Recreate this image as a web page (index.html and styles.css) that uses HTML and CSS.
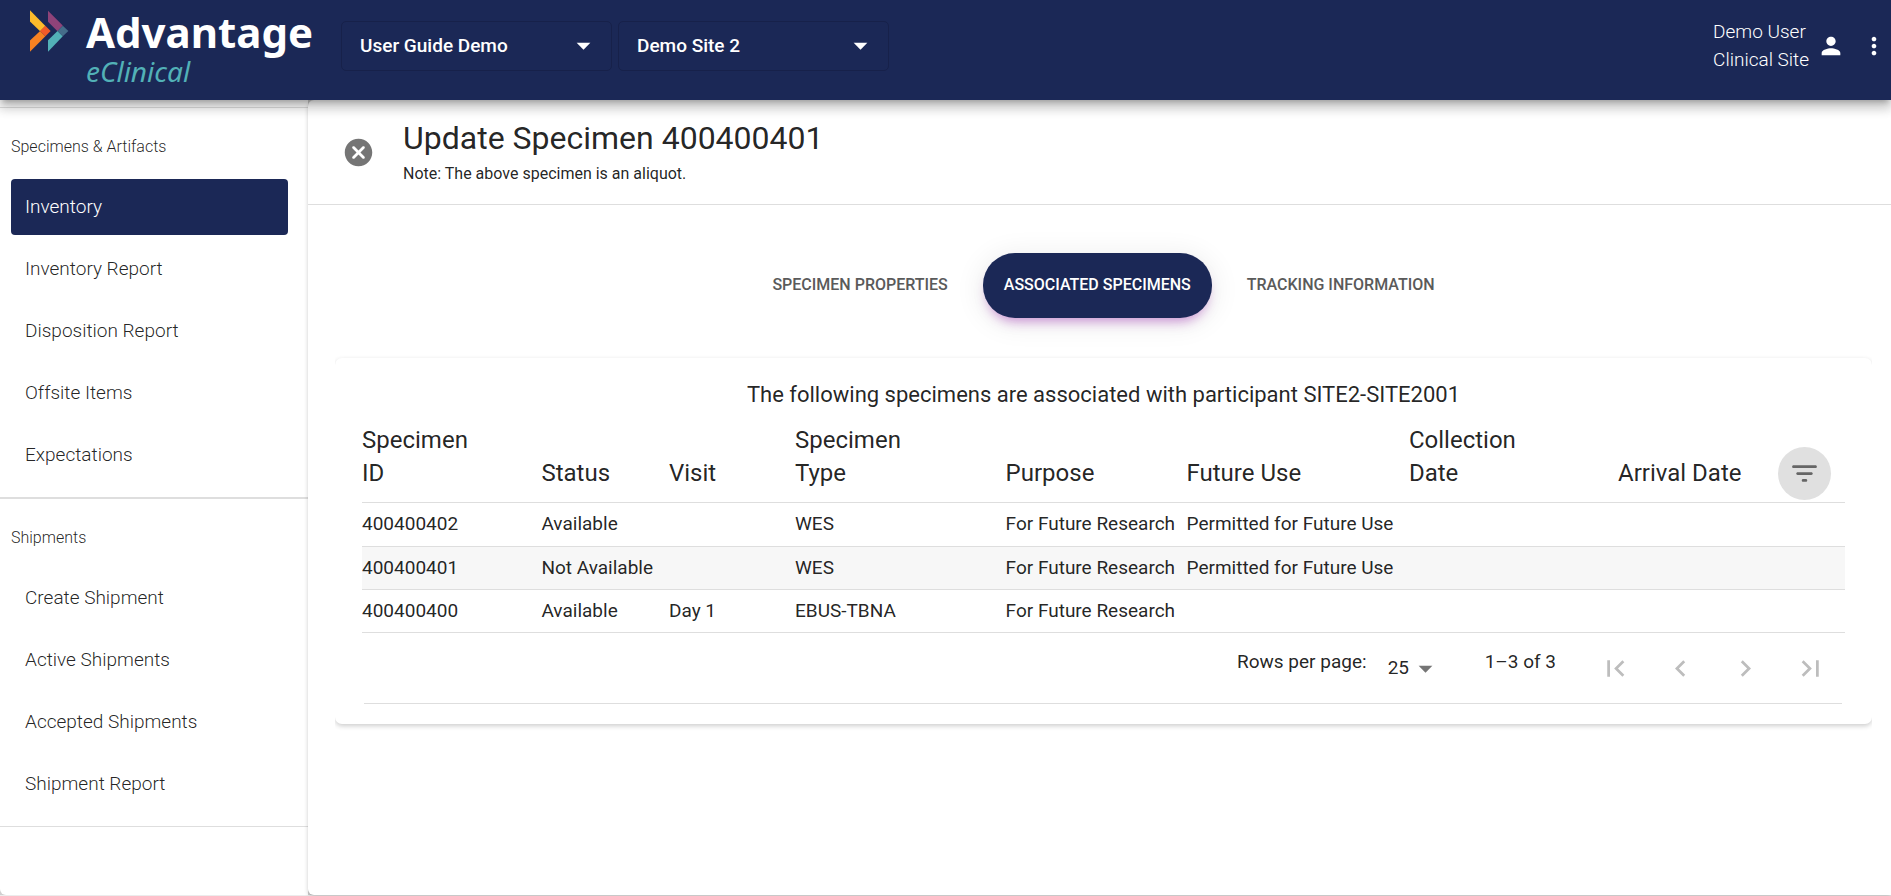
FILE: index.html
```html
<!DOCTYPE html>
<html lang="en">
<head>
<meta charset="utf-8">
<meta name="viewport" content="width=device-width, initial-scale=1">
<title>Update Specimen 400400401</title>
<link rel="stylesheet" href="styles.css">
</head>
<body>
<div class="app">
  <header class="topbar">
    <a class="brand" href="#" aria-label="Advantage eClinical">
      <svg class="brand-mark" viewBox="0 0 118 128" aria-hidden="true">
        <path fill="#fdbb2b" d="M1 1v34l31 30 16-16z"/>
        <path fill="#f68122" d="M1 127V93l31-29 16 16z"/>
        <path fill="#f15a29" d="M32 64l16-16 16 16-16 16z"/>
        <path fill="#8e4379" d="M56 2v34l29 29 16-18z"/>
        <path fill="#52b1b7" d="M56 127V92l29-28 16 16z"/>
        <path fill="#456d8a" d="M85 64l16-16 17 16-17 16z"/>
      </svg>
      <span class="brand-words">
        <span class="brand-name">Advantage</span>
        <span class="brand-sub">eClinical</span>
      </span>
    </a>
    <div class="pickers">
      <div class="picker">
        <select class="picker-select" aria-label="Protocol"><option>User Guide Demo</option></select>
        <svg class="caret" viewBox="0 0 24 24" aria-hidden="true"><path d="M7 10l5 5 5-5z"/></svg>
      </div>
      <div class="picker">
        <select class="picker-select" aria-label="Site"><option>Demo Site 2</option></select>
        <svg class="caret" viewBox="0 0 24 24" aria-hidden="true"><path d="M7 10l5 5 5-5z"/></svg>
      </div>
    </div>
    <div class="account">
      <div class="account-text">Demo User<br>Clinical Site</div>
      <button class="icon-button account-user" type="button" aria-label="Account">
        <svg class="icon-small" viewBox="0 0 24 24"><path d="M12 12c2.21 0 4-1.79 4-4s-1.79-4-4-4-4 1.79-4 4 1.790 4 4 4zm0 2c-2.670 0-8 1.340-8 4v2h16v-2c0-2.660-5.330-4-8-4z"/></svg>
      </button>
      <button class="icon-button" type="button" aria-label="More">
        <svg class="icon-small" viewBox="0 0 24 24"><path d="M12 8c1.100 0 2-.9 2-2s-.9-2-2-2-2 .9-2 2 .9 2 2 2zm0 2c-1.100 0-2 .9-2 2s.9 2 2 2 2-.9 2-2-.9-2-2-2zm0 6c-1.100 0-2 .9-2 2s.9 2 2 2 2-.9 2-2-.9-2-2-2z"/></svg>
      </button>
    </div>
  </header>

  <div class="body">
    <nav class="sidebar">
      <section class="nav-group">
        <h2 class="nav-label">Specimens &amp; Artifacts</h2>
        <a class="nav-item nav-item-active" href="#" aria-current="page">Inventory</a>
        <a class="nav-item" href="#">Inventory Report</a>
        <a class="nav-item" href="#">Disposition Report</a>
        <a class="nav-item" href="#">Offsite Items</a>
        <a class="nav-item" href="#">Expectations</a>
      </section>
      <section class="nav-group">
        <h2 class="nav-label">Shipments</h2>
        <a class="nav-item" href="#">Create Shipment</a>
        <a class="nav-item" href="#">Active Shipments</a>
        <a class="nav-item" href="#">Accepted Shipments</a>
        <a class="nav-item" href="#">Shipment Report</a>
      </section>
    </nav>

    <main class="panel">
      <div class="panel-head">
        <button class="icon-button close" type="button" aria-label="Close">
          <svg class="icon" viewBox="0 0 24 24"><path d="M12 2C6.470 2 2 6.470 2 12s4.470 10 10 10 10-4.470 10-10S17.530 2 12 2zm4.300 14.300c-.39.39-1.020.39-1.410 0L12 13.410 9.110 16.300c-.39.39-1.020.39-1.410 0-.39-.39-.39-1.020 0-1.410L10.590 12 7.700 9.110c-.39-.39-.39-1.020 0-1.410.39-.39 1.020-.39 1.410 0L12 10.590l2.890-2.890c.39-.39 1.020-.39 1.410 0 .39.39.39 1.020 0 1.410L13.410 12l2.890 2.890c.38.38.38 1.020 0 1.410z"/></svg>
        </button>
        <div>
          <h1 class="title">Update Specimen 400400401</h1>
          <p class="note">Note: The above specimen is an aliquot.</p>
        </div>
      </div>

      <div class="content">
        <div class="tabs" role="tablist">
          <button class="tab" type="button" role="tab" aria-selected="false">SPECIMEN PROPERTIES</button>
          <button class="tab tab-active" type="button" role="tab" aria-selected="true">ASSOCIATED SPECIMENS</button>
          <button class="tab" type="button" role="tab" aria-selected="false">TRACKING INFORMATION</button>
        </div>

        <div class="card-clip">
        <section class="card">
          <table class="specimens">
            <caption>The following specimens are associated with participant SITE2-SITE2001</caption>
            <colgroup>
              <col class="c-id"><col class="c-status"><col class="c-visit"><col class="c-type"><col class="c-purpose"><col class="c-future"><col class="c-collected"><col>
            </colgroup>
            <thead>
              <tr>
                <th scope="col">Specimen<br>ID</th>
                <th scope="col">Status</th>
                <th scope="col">Visit</th>
                <th scope="col">Specimen<br>Type</th>
                <th scope="col">Purpose</th>
                <th scope="col">Future Use</th>
                <th scope="col">Collection<br>Date</th>
                <th scope="col">
                  <div class="last-head">
                    <span>Arrival Date</span>
                    <button class="icon-button filter" type="button" aria-label="Filter list">
                      <svg class="icon" viewBox="0 0 24 24"><path d="M11 18h2c.55 0 1-.45 1-1s-.45-1-1-1h-2c-.55 0-1 .45-1 1s.45 1 1 1zM3 7c0 .55.45 1 1 1h16c.55 0 1-.45 1-1s-.45-1-1-1H4c-.55 0-1 .45-1 1zm4 6h10c.55 0 1-.45 1-1s-.45-1-1-1H7c-.55 0-1 .45-1 1s.45 1 1 1z"/></svg>
                    </button>
                  </div>
                </th>
              </tr>
            </thead>
            <tbody>
              <tr><td>400400402</td><td>Available</td><td></td><td>WES</td><td>For Future Research</td><td>Permitted for Future Use</td><td></td><td></td></tr>
              <tr class="current"><td>400400401</td><td>Not Available</td><td></td><td>WES</td><td>For Future Research</td><td>Permitted for Future Use</td><td></td><td></td></tr>
              <tr><td>400400400</td><td>Available</td><td>Day 1</td><td>EBUS-TBNA</td><td>For Future Research</td><td></td><td></td><td></td></tr>
            </tbody>
          </table>
          <div class="pager">
            <label class="pager-text" for="rows">Rows per page:</label>
            <div class="rows">
              <select class="rows-select" id="rows"><option>25</option></select>
              <svg class="caret rows-caret" viewBox="0 0 24 24" aria-hidden="true"><path d="M7 10l5 5 5-5z"/></svg>
            </div>
            <span class="pager-text range">1–3 of 3</span>
            <div class="pager-buttons">
              <button class="icon-button page" type="button" aria-label="First page" disabled><svg class="icon" viewBox="0 0 24 24"><path d="M18.410 16.590L13.820 12l4.590-4.590L17 6l-6 6 6 6zM6 6h2v12H6z"/></svg></button>
              <button class="icon-button page" type="button" aria-label="Previous page" disabled><svg class="icon" viewBox="0 0 24 24"><path d="M15.410 16.590L10.830 12l4.580-4.590L14 6l-6 6 6 6z"/></svg></button>
              <button class="icon-button page" type="button" aria-label="Next page" disabled><svg class="icon" viewBox="0 0 24 24"><path d="M8.590 16.590L13.170 12 8.590 7.410 10 6l6 6-6 6z"/></svg></button>
              <button class="icon-button page" type="button" aria-label="Last page" disabled><svg class="icon" viewBox="0 0 24 24"><path d="M5.590 7.410L10.180 12l-4.590 4.590L7 18l6-6-6-6zM16 6h2v12h-2z"/></svg></button>
            </div>
          </div>
        </section>
        </div>
      </div>
    </main>
  </div>
</div>
</body>
</html>
```
FILE: styles.css
```css
:root {
  --navy: #1b2856;
  --ink: rgba(0, 0, 0, 0.87);
  --line: #dedede;
}

* { box-sizing: border-box; }

body {
  margin: 0;
  background: #ececec;
  color: var(--ink);
  font-family: Roboto, "Liberation Sans", sans-serif;
  font-size: 19px;
}

h1, h2, p { margin: 0; font-weight: 400; }
button, select { font: inherit; color: inherit; }
a { color: inherit; text-decoration: none; }

.app {
  display: flex;
  flex-direction: column;
  min-height: 100vh;
  padding-bottom: 1px;
}

.icon-button {
  display: flex;
  flex: none;
  padding: 0;
  border: 0;
  border-radius: 50%;
  background: none;
}
.icon { width: 33px; height: 33px; fill: currentColor; }
.icon-small { width: 28px; height: 28px; fill: currentColor; }

/* Top bar */
.topbar {
  position: relative;
  z-index: 2;
  display: flex;
  height: 100px;
  background: var(--navy);
  color: #fff;
  box-shadow: 0 5px 5px -3px rgba(0, 0, 0, 0.2), 0 8px 10px 1px rgba(0, 0, 0, 0.14), 0 3px 14px 2px rgba(0, 0, 0, 0.12);
}
.brand {
  display: flex;
  gap: 17px;
  width: 341px;
  padding-left: 29px;
}
.brand-mark { width: 40px; height: 42px; margin-top: 10px; }
.brand-words { display: flex; flex-direction: column; font-family: "Noto Sans", "Open Sans", sans-serif; }
.brand-name { font-size: 42px; line-height: 56px; padding-top: 4px; font-weight: 700; }
.brand-sub { font-size: 28px; line-height: 22px; font-style: italic; color: #52b1b7; }

.pickers { display: flex; gap: 6px; padding-top: 21px; }
.picker { position: relative; width: 271px; height: 50px; }
.picker-select {
  width: 100%;
  height: 50px;
  padding: 0 56px 2px 18px;
  border: 1px solid #17214a;
  border-radius: 5px;
  background: transparent;
  font-weight: 500;
  appearance: none;
}
.caret {
  position: absolute;
  top: 8px;
  right: 12px;
  width: 33px;
  height: 33px;
  fill: currentColor;
  pointer-events: none;
}

.account { display: flex; margin-left: auto; padding: 18px 3px 0 0; }
.account-text { font-weight: 300; line-height: 28px; }
.account-user { margin: 0 15px 0 8px; }
.account .icon-button { height: 28px; margin-top: 14px; }

/* Body */
.body { display: flex; flex: 1; background: #d0d0d0; }

.sidebar {
  flex: none;
  width: 308px;
  padding-top: 7px;
  background: #fff;
  border-bottom-left-radius: 6px;
}
.nav-group {
  padding: 24px 20px 8px 11px;
  border-bottom: 1px solid var(--line);
}
.nav-group:first-child { border-top: 1px solid var(--line); border-bottom-width: 2px; }
.nav-label { padding-bottom: 18px; font-size: 16px; line-height: 29px; font-weight: 300; }
.nav-item {
  display: block;
  margin-bottom: 6px;
  padding: 0 14px;
  border-radius: 4px;
  font-weight: 300;
  line-height: 56px;
}
.nav-item-active { background: var(--navy); color: #fff; }

.panel {
  flex: 1;
  min-width: 0;
  background: #fff;
  border-radius: 6px 0 0 6px;
  box-shadow: 0 2px 4px rgba(0, 0, 0, 0.2);
}
.panel-head {
  display: flex;
  align-items: center;
  gap: 28px;
  min-height: 105px;
  padding: 0 34px;
  border-bottom: 1px solid var(--line);
}
.close { color: #757575; }
.title { font-size: 32px; line-height: 43px; }
.note { font-size: 16px; line-height: 28px; }

.content { padding: 48px 19px 48px 27px; }

.tabs { display: flex; justify-content: center; gap: 14px; }
.tab {
  height: 65px;
  padding: 0 21px 2px;
  border: 0;
  border-radius: 32px;
  background: none;
  color: #5a5a5a;
  font-size: 16px;
  font-weight: 500;
}
.tab-active {
  background: var(--navy);
  color: #fff;
  box-shadow: 0 8px 12px -5px rgba(156, 39, 176, 0.5), 0 4px 26px 6px rgba(0, 0, 0, 0.06);
}

/* Card */
.card-clip { margin-top: 30px; padding: 10px 0; overflow: hidden; }
.card {
  padding: 22px 27px 20px;
  border-radius: 7px;
  box-shadow: 0 2px 5px rgba(0, 0, 0, 0.2);
}

.specimens { width: 100%; border-collapse: collapse; table-layout: fixed; }
.specimens caption { padding-bottom: 14px; font-size: 22px; line-height: 30px; }
.specimens th {
  padding: 0 0 12px;
  border-bottom: 1px solid var(--line);
  font-size: 24px;
  line-height: 33px;
  font-weight: 400;
  text-align: left;
  vertical-align: bottom;
}
.specimens td {
  height: 43px;
  padding: 0 0 2px;
  border-bottom: 1px solid var(--line);
  white-space: nowrap;
}
.specimens tbody tr:first-child td { height: 44px; }
.c-id { width: 12.1%; }
.c-status { width: 8.6%; }
.c-visit { width: 8.5%; }
.c-type { width: 14.2%; }
.c-purpose { width: 12.2%; }
.c-future { width: 15%; }
.c-collected { width: 14.1%; }
.current { background: #f7f7f7; }

.last-head { display: flex; align-items: center; justify-content: space-between; height: 33px; padding-right: 14px; }
.filter { padding: 10px; background: #e0e0e0; color: #666; }

.pager {
  display: flex;
  justify-content: flex-end;
  height: 71px;
  margin: 0 3px 0 2px;
  padding-right: 15px;
  border-bottom: 1px solid var(--line);
}
.pager-text { padding-top: 14px; line-height: 30px; }
.rows { position: relative; width: 54px; margin: 19px 0 0 21px; }
.rows-select {
  width: 100%;
  height: 30px;
  padding: 0;
  border: 0;
  background: none;
  appearance: none;
}
.rows-caret { top: 0; right: 0; color: #757575; }
.range { margin-left: 43px; }
.pager-buttons { display: flex; gap: 32px; margin-left: 43px; padding-top: 19px; }
.page { height: 33px; color: #bdbdbd; }
```
